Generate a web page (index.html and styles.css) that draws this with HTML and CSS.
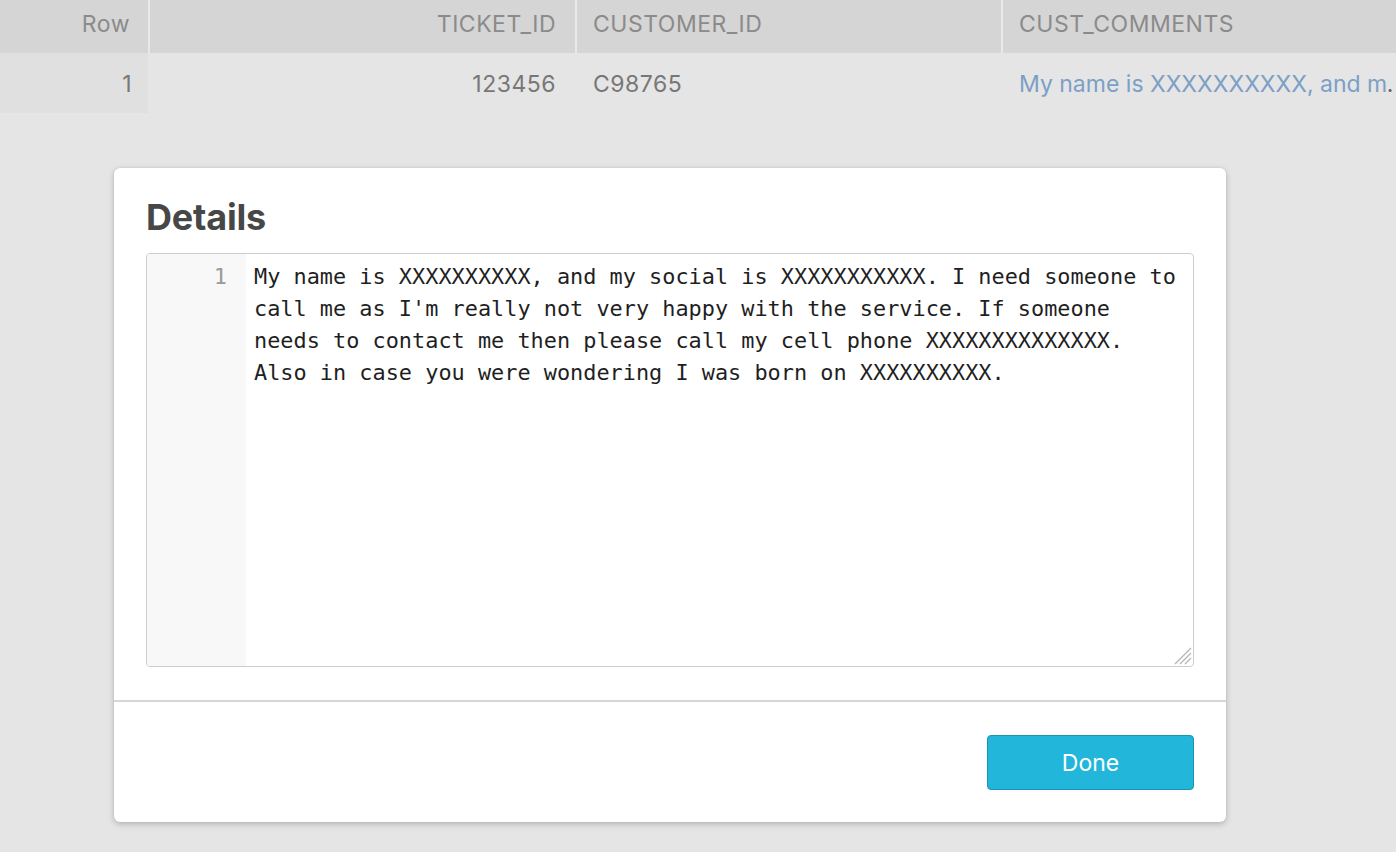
FILE: index.html
```html
<!DOCTYPE html>
<html>
<head>
<meta charset="utf-8">
<link rel="stylesheet" href="styles.css">
</head>
<body>
<div class="grid">
  <div class="row head">
    <div class="cell c-row num">Row</div>
    <div class="cell c-ticket num">TICKET_ID</div>
    <div class="cell c-cust">CUSTOMER_ID</div>
    <div class="cell c-comm">CUST_COMMENTS</div>
  </div>
  <div class="row data">
    <div class="cell c-row num rownum">1</div>
    <div class="cell c-ticket num">123456</div>
    <div class="cell c-cust">C98765</div>
    <div class="cell c-comm"><span class="trunc"><a class="link">My name is XXXXXXXXXX, and my social is XXXXXXXXXXX. I need someone to call me</a></span></div>
  </div>
</div>

<div class="modal">
  <div class="modal-body">
    <h2 class="title">Details</h2>
    <div class="editor">
      <div class="gutter">1</div>
      <div class="code">My name is XXXXXXXXXX, and my social is XXXXXXXXXXX. I need someone to call me as I'm really not very happy with the service. If someone needs to contact me then please call my cell phone XXXXXXXXXXXXXX. Also in case you were wondering I was born on XXXXXXXXXX.</div>
      <svg class="resize" width="20" height="20" viewBox="0 0 20 20">
        <path d="M19 3 L3 19 M19 8 L8 19 M19 13 L13 19" stroke="#b5b5b5" stroke-width="1.3" fill="none"/>
      </svg>
    </div>
  </div>
  <div class="modal-foot">
    <button class="done">Done</button>
  </div>
</div>
</body>
</html>
```

FILE: styles.css
```css
* { box-sizing: border-box; }
html, body {
  margin: 0;
  padding: 0;
  width: 1396px;
  height: 852px;
  overflow: hidden;
  background: #e5e5e5;
  font-family: Inter, "Liberation Sans", sans-serif;
}
.grid {
  width: 1396px;
  overflow: hidden;
}
.row {
  display: flex;
  white-space: nowrap;
}
.cell {
  flex: none;
  font-size: 23px;
  letter-spacing: 0.5px;
  overflow: hidden;
}
.head {
  background: #d5d5d5;
  height: 53px;
}
.head .cell {
  color: #8b8b8b;
  line-height: 48px;
  height: 53px;
  border-right: 2px solid #e9e9e9;
}
.data {
  height: 60px;
}
.data .cell {
  color: #777;
  line-height: 60px;
  height: 60px;
  padding-top: 1px;
  border-right: 2px solid transparent;
}
.c-row { width: 150px; padding-right: 18px; }
.c-ticket { width: 427px; padding-right: 19px; }
.c-cust { width: 426px; padding-left: 16px; }
.c-comm { flex: 1; padding-left: 16px; }
.head .c-comm { border-right: none; }
.num { text-align: right; }
.data .rownum {
  background: #e0e0e0;
  width: 148px;
  padding-right: 16px;
  border-right: none;
  margin-right: 2px;
}
.trunc {
  display: block;
  width: 400px;
  overflow: hidden;
  text-overflow: ellipsis;
  color: #666;
  letter-spacing: 0;
}
.link {
  color: #7c9fc5;
}

.modal {
  position: absolute;
  left: 114px;
  top: 168px;
  width: 1112px;
  height: 654px;
  background: #fff;
  border-radius: 6px;
  box-shadow: 0 2px 6px rgba(0,0,0,0.22), 0 0 2px rgba(0,0,0,0.08);
  display: flex;
  flex-direction: column;
}
.modal-body {
  padding: 27px 32px 33px 32px;
  border-bottom: 2px solid #d6d6d6;
}
.title {
  margin: 0 0 14px 0;
  font-size: 36px;
  line-height: 44px;
  font-weight: 700;
  color: #474747;
  letter-spacing: -0.2px;
}
.editor {
  position: relative;
  display: flex;
  height: 414px;
  border: 1px solid #cdcdcd;
  border-radius: 4px;
  overflow: hidden;
}
.gutter {
  width: 99px;
  flex: none;
  background: #f8f8f8;
  color: #9a9a9a;
  text-align: right;
  padding: 7px 19px 0 0;
  font-family: "DejaVu Sans Mono", "Liberation Mono", monospace;
  font-size: 21.88px;
  line-height: 32px;
}
.code {
  width: 934px;
  padding: 7px 0 0 8px;
  font-family: "DejaVu Sans Mono", "Liberation Mono", monospace;
  font-size: 21.88px;
  line-height: 32px;
  color: #1f1f1f;
  white-space: pre-wrap;
}
.resize {
  position: absolute;
  right: 1px;
  bottom: 1px;
}
.modal-foot {
  flex: 1;
  display: flex;
  justify-content: flex-end;
  align-items: center;
  padding: 0 32px 0 32px;
}
.done {
  width: 207px;
  height: 55px;
  background: #22b6da;
  border: 1px solid #1b93b1;
  border-radius: 4px;
  color: #fff;
  font-family: Inter, "Liberation Sans", sans-serif;
  font-size: 23px;
  padding: 1px 0 0 0;
}
```
